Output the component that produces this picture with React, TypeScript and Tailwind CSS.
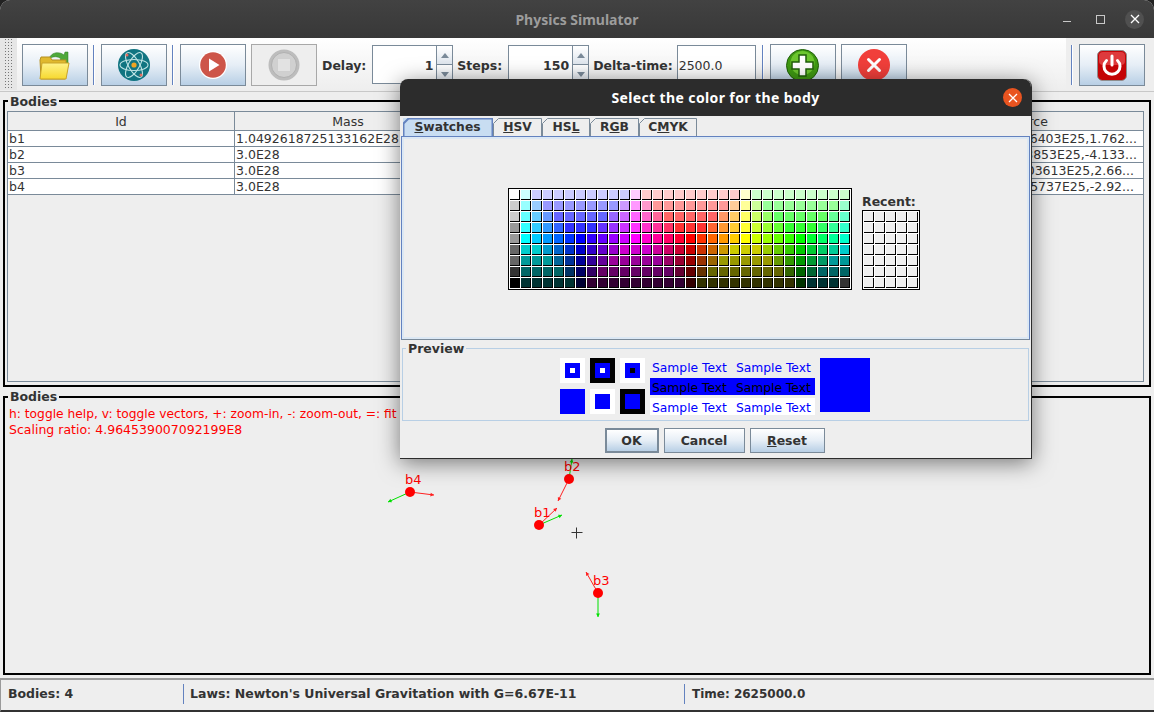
import type { ReactNode } from 'react';

const GRAD = 'bg-gradient-to-b from-white via-[#e6eef6] to-[#b8cfe5]';

// Swatch rows from the Swing colour chooser, [hex, repeat]
const SWATCHES: [string, number][][] = [
  [['#ffffff', 1], ['#ccffff', 1], ['#ccccff', 9], ['#ffccff', 1], ['#ffcccc', 9], ['#ffffcc', 1], ['#ccffcc', 9]],
  [['#cccccc', 1], ['#99ffff', 1], ['#99ccff', 1], ['#9999ff', 7], ['#cc99ff', 1], ['#ff99ff', 1], ['#ff99cc', 1], ['#ff9999', 7], ['#ffcc99', 1], ['#ffff99', 1], ['#ccff99', 1], ['#99ff99', 7], ['#99ffcc', 1]],
  [['#cccccc', 1], ['#66ffff', 1], ['#66ccff', 1], ['#6699ff', 1], ['#6666ff', 5], ['#9966ff', 1], ['#cc66ff', 1], ['#ff66ff', 1], ['#ff66cc', 1], ['#ff6699', 1], ['#ff6666', 5], ['#ff9966', 1], ['#ffcc66', 1], ['#ffff66', 1], ['#ccff66', 1], ['#99ff66', 1], ['#66ff66', 5], ['#66ff99', 1], ['#66ffcc', 1]],
  [['#999999', 1], ['#33ffff', 1], ['#33ccff', 1], ['#3399ff', 1], ['#3366ff', 1], ['#3333ff', 3], ['#6633ff', 1], ['#9933ff', 1], ['#cc33ff', 1], ['#ff33ff', 1], ['#ff33cc', 1], ['#ff3399', 1], ['#ff3366', 1], ['#ff3333', 3], ['#ff6633', 1], ['#ff9933', 1], ['#ffcc33', 1], ['#ffff33', 1], ['#ccff33', 1], ['#99ff33', 1], ['#66ff33', 1], ['#33ff33', 3], ['#33ff66', 1], ['#33ff99', 1], ['#33ffcc', 1]],
  [['#999999', 1], ['#00ffff', 1], ['#00ccff', 1], ['#0099ff', 1], ['#0066ff', 1], ['#0033ff', 1], ['#0000ff', 1], ['#3300ff', 1], ['#6600ff', 1], ['#9900ff', 1], ['#cc00ff', 1], ['#ff00ff', 1], ['#ff00cc', 1], ['#ff0099', 1], ['#ff0066', 1], ['#ff0033', 1], ['#ff0000', 1], ['#ff3300', 1], ['#ff6600', 1], ['#ff9900', 1], ['#ffcc00', 1], ['#ffff00', 1], ['#ccff00', 1], ['#99ff00', 1], ['#66ff00', 1], ['#33ff00', 1], ['#00ff00', 1], ['#00ff33', 1], ['#00ff66', 1], ['#00ff99', 1], ['#00ffcc', 1]],
  [['#666666', 1], ['#00cccc', 2], ['#0099cc', 1], ['#0066cc', 1], ['#0033cc', 1], ['#0000cc', 1], ['#3300cc', 1], ['#6600cc', 1], ['#9900cc', 1], ['#cc00cc', 3], ['#cc0099', 1], ['#cc0066', 1], ['#cc0033', 1], ['#cc0000', 1], ['#cc3300', 1], ['#cc6600', 1], ['#cc9900', 1], ['#cccc00', 3], ['#99cc00', 1], ['#66cc00', 1], ['#33cc00', 1], ['#00cc00', 1], ['#00cc33', 1], ['#00cc66', 1], ['#00cc99', 1], ['#00cccc', 1]],
  [['#666666', 1], ['#009999', 3], ['#006699', 1], ['#003399', 1], ['#000099', 1], ['#330099', 1], ['#660099', 1], ['#990099', 5], ['#990066', 1], ['#990033', 1], ['#990000', 1], ['#993300', 1], ['#996600', 1], ['#999900', 5], ['#669900', 1], ['#339900', 1], ['#009900', 1], ['#009933', 1], ['#009966', 1], ['#009999', 2]],
  [['#333333', 1], ['#006666', 4], ['#003366', 1], ['#000066', 1], ['#330066', 1], ['#660066', 7], ['#660033', 1], ['#660000', 1], ['#663300', 1], ['#666600', 7], ['#336600', 1], ['#006600', 1], ['#006633', 1], ['#006666', 3]],
  [['#000000', 1], ['#003333', 5], ['#000033', 1], ['#330033', 9], ['#330000', 1], ['#333300', 9], ['#003300', 1], ['#003333', 3], ['#333333', 1]],
];

const ROWS = [
  { id: 'b1', mass: '1.0492618725133162E28', force: '1.23456789012346403E25,1.762...', pad: 'pr-[6px]' },
  { id: 'b2', mass: '3.0E28', force: '-1.23456789013853E25,-4.133...', pad: 'pr-[6px]' },
  { id: 'b3', mass: '3.0E28', force: '1.234567890103613E25,2.66...', pad: 'pr-[9px]' },
  { id: 'b4', mass: '3.0E28', force: '-1.23456789015737E25,-2.92...', pad: 'pr-[9px]' },
];

function ToolButton({ children, className = '', disabled = false }: { children: ReactNode; className?: string; disabled?: boolean }) {
  return (
    <div
      className={`flex h-[42px] w-[66px] shrink-0 items-center justify-center border ${
        disabled ? 'border-[#a8a8a8] bg-[#eeeeee]' : `border-[#7a8a99] ${GRAD}`
      } ${className}`}
    >
      {children}
    </div>
  );
}

function Sep({ className = '' }: { className?: string }) {
  return <div className={`h-[40px] w-[2px] shrink-0 border-l border-[#6382bf] bg-white ${className}`} />;
}

function Spinner({ value, className = '' }: { value: string; className?: string }) {
  return (
    <div className={`flex h-[39px] w-[81px] shrink-0 border border-[#7a8a99] bg-white ${className}`}>
      <div className="flex flex-1 items-center justify-end pr-[3px] pt-[3px] font-bold">{value}</div>
      <div className="flex w-[16px] flex-col border-l border-[#7a8a99] bg-[#eeeeee]">
        <div className="flex h-[19px] items-center justify-center border-b border-[#7a8a99] bg-gradient-to-b from-white to-[#dfe6ee]">
          <div className="h-0 w-0 border-x-[4px] border-b-[5px] border-x-transparent border-b-[#7a8a99]" />
        </div>
        <div className="flex flex-1 items-center justify-center bg-gradient-to-b from-white to-[#dfe6ee]">
          <div className="h-0 w-0 border-x-[4px] border-t-[5px] border-x-transparent border-t-[#7a8a99]" />
        </div>
      </div>
    </div>
  );
}

function FolderIcon() {
  return (
    <svg width="34" height="32" viewBox="0 0 34 32">
      <defs>
        <linearGradient id="folderFront" x1="0" y1="0" x2="0" y2="1">
          <stop offset="0" stopColor="#fff38a" />
          <stop offset="1" stopColor="#f6d82e" />
        </linearGradient>
      </defs>
      <path d="M11 10 C13 3 21 2 26 6 L27 3 L30 3 L30 14 L20 13 L23 10 C20 7 15 7 11 10Z" fill="#4ea83a" stroke="#2f7d25" strokeWidth="0.5" />
      <path d="M2 11 L3 8 L12 8 L14 11 L28 11 L28 14 L27 30 L3 30Z" fill="#e0b92e" stroke="#b48f20" strokeWidth="1" />
      <path d="M4 14 L31 14 L28 30 L2 30Z" fill="url(#folderFront)" stroke="#c9a32a" strokeWidth="1" />
    </svg>
  );
}

function AtomIcon() {
  return (
    <svg width="32" height="32" viewBox="0 0 32 32">
      <circle cx="16" cy="16" r="16" fill="#107481" />
      <g fill="none" stroke="#bfe3e4" strokeWidth="1.1">
        <ellipse cx="16" cy="16" rx="14" ry="5.5" />
        <ellipse cx="16" cy="16" rx="14" ry="5.5" transform="rotate(60 16 16)" />
        <ellipse cx="16" cy="16" rx="14" ry="5.5" transform="rotate(120 16 16)" />
      </g>
      <circle cx="16" cy="16" r="2.6" fill="#efa423" />
      <circle cx="9" cy="6" r="1.5" fill="#e36a5d" />
      <circle cx="23" cy="26" r="1.5" fill="#e36a5d" />
    </svg>
  );
}

function PlayIcon() {
  return (
    <svg width="28" height="28" viewBox="0 0 28 28">
      <circle cx="14" cy="14" r="14" fill="#ffffff" />
      <circle cx="14" cy="14" r="12.8" fill="#cd5549" />
      <path d="M10 7.5 L20.5 14 L10 20.5Z" fill="#ffffff" />
    </svg>
  );
}

function StopIcon() {
  return (
    <svg width="32" height="32" viewBox="0 0 32 32">
      <circle cx="16" cy="16" r="15.5" fill="#bdbdbd" />
      <circle cx="16" cy="16" r="12.5" fill="#d0d0d0" stroke="#b0b0b0" />
      <rect x="9.5" y="9.5" width="13" height="13" fill="#e2e2e2" stroke="#cfcfcf" />
    </svg>
  );
}

function AddIcon() {
  return (
    <svg width="33" height="33" viewBox="0 0 33 33">
      <circle cx="16.5" cy="16.5" r="16" fill="#3f9a12" stroke="#1f5f08" />
      <circle cx="16.5" cy="14" r="12" fill="#6cc62e" />
      <path d="M13 6 H20 V13 H27 V20 H20 V27 H13 V20 H6 V13 H13Z" fill="#ffffff" stroke="#1f5f08" strokeWidth="1.5" />
    </svg>
  );
}

function DeleteIcon() {
  return (
    <svg width="32" height="32" viewBox="0 0 32 32">
      <circle cx="16" cy="16" r="16" fill="#f13f3b" />
      <path d="M10.5 10.5 L21.5 21.5 M21.5 10.5 L10.5 21.5" stroke="#ffffff" strokeWidth="3" strokeLinecap="round" />
    </svg>
  );
}

function ExitIcon() {
  return (
    <svg width="30" height="31" viewBox="0 0 30 31">
      <rect x="0.5" y="0.5" width="29" height="30" rx="5" fill="#c40406" stroke="#8d8d8d" />
      <rect x="2" y="2" width="26" height="13" rx="4" fill="#de3a3c" />
      <path d="M9.5 10.5 A8 8 0 1 0 20.5 10.5" fill="none" stroke="#ffffff" strokeWidth="3" strokeLinecap="round" />
      <path d="M15 6 V15" stroke="#ffffff" strokeWidth="3" strokeLinecap="round" />
    </svg>
  );
}

function Toolbar() {
  return (
    <div className="flex h-[54px] shrink-0 border-b border-[#c8c8c8] bg-[#eeeeee]">
      <div className="flex h-[52px] w-[1066px] shrink-0 items-start bg-gradient-to-b from-white via-[#f6f6f6] to-[#eeeeee]">
        <div className="h-[52px] w-[17px] shrink-0 bg-[#e6e6e6] pl-[4px]">
          <div className="h-full w-[9px] bg-[radial-gradient(#777777_0.7px,transparent_0.9px)] bg-[length:3px_3px]" />
        </div>
        <div className="flex items-start pt-[6px]">
          <ToolButton className="ml-[5px]"><FolderIcon /></ToolButton>
          <Sep className="ml-[5px] mt-[1px]" />
          <ToolButton className="ml-[6px]"><AtomIcon /></ToolButton>
          <Sep className="ml-[5px] mt-[1px]" />
          <ToolButton className="ml-[6px]"><PlayIcon /></ToolButton>
          <ToolButton className="ml-[5px]" disabled><StopIcon /></ToolButton>
          <span className="ml-[5px] mt-[13px] font-bold">Delay:</span>
          <Spinner value="1" className="ml-[6px] mt-[1px]" />
          <span className="ml-[4px] mt-[13px] font-bold">Steps:</span>
          <Spinner value="150" className="ml-[6px] mt-[1px]" />
          <span className="ml-[4px] mt-[13px] font-bold">Delta-time:</span>
          <div className="ml-[4px] mt-[1px] flex h-[39px] w-[79px] shrink-0 items-center border border-[#7a8a99] bg-white pl-[1px] pt-[3px]">2500.0</div>
          <Sep className="ml-[6px] mt-[1px]" />
          <ToolButton className="ml-[6px]"><AddIcon /></ToolButton>
          <ToolButton className="ml-[5px]"><DeleteIcon /></ToolButton>
        </div>
      </div>
      <div className="flex items-start pt-[6px]">
        <Sep className="ml-[5px] mt-[1px]" />
        <ToolButton className="ml-[6px]"><ExitIcon /></ToolButton>
      </div>
    </div>
  );
}

function TitledPanel({ children, className = '', titleClass = 'top-[-9px]' }: { children: ReactNode; className?: string; titleClass?: string }) {
  return (
    <div className={`relative mx-[3px] border-2 border-black ${className}`}>
      <span className={`absolute left-[3px] bg-[#eeeeee] px-[2px] text-[12.5px] font-bold leading-[15px] ${titleClass}`}>Bodies</span>
      {children}
    </div>
  );
}

function BodiesTable() {
  return (
    <div className="h-[271px] border border-[#7a8a99]">
      <div className="grid h-[19px] grid-cols-5 border-b border-[#7a8a99]">
        {['Id', 'Mass', 'Position', 'Velocity', 'Force'].map((h) => (
          <div key={h} className="border-r border-[#7a8a99] text-center leading-[19px] last:border-r-0 last:pl-[3px]">{h}</div>
        ))}
      </div>
      {ROWS.map((r) => (
        <div key={r.id} className="grid h-[16px] grid-cols-5 border-b border-[#7a8a99] bg-white">
          <div className="border-r border-[#7a8a99] pl-[1px] leading-[15px]">{r.id}</div>
          <div className="border-r border-[#7a8a99] pl-[1px] leading-[15px]">{r.mass}</div>
          <div className="overflow-hidden whitespace-nowrap border-r border-[#7a8a99] pl-[1px] leading-[15px]">0.0,0.0</div>
          <div className="overflow-hidden whitespace-nowrap border-r border-[#7a8a99] pl-[1px] leading-[15px]">0.0,0.0</div>
          <div className={`flex justify-end overflow-hidden whitespace-nowrap leading-[15px] ${r.pad}`}>{r.force}</div>
        </div>
      ))}
    </div>
  );
}

function Arrow({ x1, y1, x2, y2, color }: { x1: number; y1: number; x2: number; y2: number; color: string }) {
  const a = Math.atan2(y2 - y1, x2 - x1);
  const p = (off: number) => `${x2 - 4 * Math.cos(a + off)},${y2 - 4 * Math.sin(a + off)}`;
  return (
    <g>
      <line x1={x1} y1={y1} x2={x2} y2={y2} stroke={color} strokeWidth="1" />
      <polygon points={`${x2},${y2} ${p(0.5)} ${p(-0.5)}`} fill={color} />
    </g>
  );
}

// Coordinates are page pixels: the svg's viewBox starts where the viewer panel does
function Body({ name, x, y, red, green }: { name: string; x: number; y: number; red: [number, number]; green: [number, number] }) {
  return (
    <g>
      <Arrow x1={x} y1={y} x2={red[0]} y2={red[1]} color="#ff2020" />
      <Arrow x1={x} y1={y} x2={green[0]} y2={green[1]} color="#00e000" />
      <circle cx={x} cy={y} r="5" fill="#ff0000" />
      <text x={x - 5} y={y - 8} fill="#ff0000" fontSize="13" fontFamily="'DejaVu Sans', sans-serif">{name}</text>
    </g>
  );
}

function Viewer() {
  return (
    <TitledPanel className="mt-[9px] h-[279px]">
      <div className="relative h-full text-[#ff0000]">
        <div className="pl-[4px] pt-[9px] text-[12.5px] leading-[15px]">
          <div className="text-[12.28px]">h: toggle help, v: toggle vectors, +: zoom-in, -: zoom-out, =: fit</div>
          <div>Scaling ratio: 4.964539007092199E8</div>
        </div>
        <svg className="absolute left-0 top-0" width="1144" height="275" viewBox="5 398 1144 275">
          <Body name="b4" x={410} y={492} red={[434, 495]} green={[388, 502]} />
          <Body name="b2" x={569} y={479} red={[558, 501]} green={[572, 459]} />
          <Body name="b1" x={539} y={525} red={[557, 508]} green={[562, 515]} />
          <Body name="b3" x={598} y={593} red={[586, 572]} green={[598, 617]} />
          <path d="M571.5 532.5 H582.5 M576.5 527.5 V538.5" stroke="#333333" strokeWidth="1" />
        </svg>
      </div>
    </TitledPanel>
  );
}

function StatusBar() {
  return (
    <div className="mt-[3px] flex h-[34px] items-center border-b-2 border-l border-t-2 border-[#9a9a9a] border-b-[#333333] bg-[#eeeeee] pb-[2px] font-bold">
      <div className="flex w-[182px] items-center pl-[7px]">Bodies: 4</div>
      <div className="h-[20px] w-px bg-[#6382bf]" />
      <div className="w-[500px] pl-[6px]">Laws: Newton's Universal Gravitation with G=6.67E-11</div>
      <div className="h-[20px] w-px bg-[#6382bf]" />
      <div className="pl-[7px] text-[12px]">Time: 2625000.0</div>
    </div>
  );
}

function Tab({ width, selected = false, children }: { width: number; selected?: boolean; children: ReactNode }) {
  const line = selected ? '#6382bf' : '#7a8a99';
  return (
    <div
      className={`relative flex h-[18px] shrink-0 items-center justify-center pt-[1px] text-[12.3px] font-bold ${selected ? 'bg-[#c8ddf2] pr-[1px]' : ''}`}
      style={{ width }}
    >
      <svg className="absolute left-0 top-0" width={width} height="18">
        <path d={`M0.5 18 V5.5 L5.5 0.5 H${width - 0.5} V18`} fill="none" stroke={line} strokeWidth={selected ? 2 : 1} />
      </svg>
      <span className="relative">{children}</span>
    </div>
  );
}

function SwatchGrid() {
  return (
    <div className="flex flex-col gap-px border border-black bg-white p-px">
      {SWATCHES.map((row, i) => (
        <div key={i} className="flex gap-px">
          {row.flatMap(([c, n], j) =>
            Array.from({ length: n }, (_, k) => (
              <div key={`${j}-${k}`} className="h-[10px] w-[10px] border-b border-r border-black" style={{ background: c }} />
            ))
          )}
        </div>
      ))}
    </div>
  );
}

function RecentGrid() {
  return (
    <div className="flex flex-col gap-px border border-black bg-white p-px">
      {Array.from({ length: 7 }, (_, i) => (
        <div key={i} className="flex gap-px">
          {Array.from({ length: 5 }, (_, j) => (
            <div key={j} className="h-[10px] w-[10px] border-b border-r border-black bg-[#eeeeee]" />
          ))}
        </div>
      ))}
    </div>
  );
}

function Square({ outer, mid, inner }: { outer: string; mid: string; inner?: string }) {
  return (
    <div className={`flex h-[25px] w-[25px] items-center justify-center ${outer}`}>
      {mid && (
        <div className={`flex h-[15px] w-[15px] items-center justify-center ${mid}`}>
          {inner && <div className={`h-[5px] w-[5px] ${inner}`} />}
        </div>
      )}
    </div>
  );
}

function SampleLine({ className = '' }: { className?: string }) {
  return (
    <div className={`flex h-[17px] w-[165px] items-center gap-[9px] pl-[2px] text-[12.3px] ${className}`}>
      <span>Sample Text</span>
      <span>Sample Text</span>
    </div>
  );
}

function Preview() {
  return (
    <div className="relative mx-[2px] mt-[8px] h-[73px] border border-[#b8cfe5]">
      <span className="absolute left-[3px] top-[-8px] bg-[#eeeeee] px-[2px] text-[12.5px] font-bold leading-[15px]">Preview</span>
      <div className="flex pl-[157px] pt-[9px]">
        <div className="grid grid-cols-3 gap-x-[5px] gap-y-[5px]">
          <Square outer="bg-white" mid="bg-[#0000ff]" inner="bg-white" />
          <Square outer="bg-black" mid="bg-[#0000ff]" inner="bg-white" />
          <Square outer="bg-white" mid="bg-[#0000ff]" inner="bg-black" />
          <Square outer="bg-[#0000ff]" mid="" />
          <Square outer="bg-white" mid="bg-[#0000ff]" />
          <Square outer="bg-black" mid="bg-[#0000ff]" />
        </div>
        <div className="ml-[5px] flex flex-col text-[#0000ff]">
          <SampleLine className="mt-[1px] h-[19px]" />
          <SampleLine className="bg-[#0000ff] pt-[3px] text-black" />
          <SampleLine className="mt-[3px] bg-white pt-[3px]" />
        </div>
        <div className="ml-[5px] h-[54px] w-[50px] bg-[#0000ff]" />
      </div>
    </div>
  );
}

function DialogButton({ children, width, main = false }: { children: ReactNode; width: number; main?: boolean }) {
  return (
    <div
      className={`flex h-[25px] items-center justify-center border-[#7a8a99] pt-[1px] text-[12.5px] font-bold ${GRAD} ${main ? 'border-2' : 'border'}`}
      style={{ width }}
    >
      {children}
    </div>
  );
}

function ColorDialog() {
  return (
    <div className="absolute left-[400px] top-[79px] flex h-[380px] w-[632px] flex-col rounded-t-[8px] border-b border-r border-[#2c2c2c] bg-[#eeeeee] shadow-[0_4px_22px_rgba(0,0,0,0.5)]">
      <div className="relative flex h-[37px] shrink-0 items-center justify-center rounded-t-[8px] bg-[#2c2c2c] text-[14px] font-bold tracking-[0.38px] text-white [font-family:'Noto_Sans',sans-serif]">
        Select the color for the body
        <div className="absolute right-[9px] top-[9px] flex h-[19px] w-[19px] items-center justify-center rounded-full bg-[#e95420]">
          <svg width="10" height="10" viewBox="0 0 10 10">
            <path d="M1 1 L9 9 M9 1 L1 9" stroke="#ffffff" strokeWidth="1.3" />
          </svg>
        </div>
      </div>
      <div className="flex pl-[3px] pt-[2px]">
        <Tab width={90} selected><span className="underline">S</span>watches</Tab>
        <Tab width={49}><span className="underline">H</span>SV</Tab>
        <Tab width={48}>HS<span className="underline">L</span></Tab>
        <Tab width={49}>R<span className="underline">G</span>B</Tab>
        <Tab width={58}>C<span className="underline">M</span>YK</Tab>
      </div>
      <div className="mx-[1px] h-[204px] border border-[#6382bf] border-b-[#7a8a99]">
        <div className="h-full border-2 border-[#dce8f4] pl-[104px] pt-[49px]">
          <div className="flex items-end">
            <SwatchGrid />
            <div className="ml-[10px]">
              <div className="text-[12.5px] font-bold leading-[16px]">Recent:</div>
              <RecentGrid />
            </div>
          </div>
        </div>
      </div>
      <Preview />
      <div className="mt-[7px] flex justify-center gap-[5px] pr-[2px]">
        <DialogButton width={54} main>OK</DialogButton>
        <DialogButton width={81}>Cancel</DialogButton>
        <DialogButton width={75}><span><span className="underline">R</span>eset</span></DialogButton>
      </div>
    </div>
  );
}

export default function App() {
  return (
    <div className="relative h-[712px] w-[1154px] overflow-hidden bg-[#222222] text-[12.5px] text-[#333333] [font-family:'DejaVu_Sans',sans-serif]">
      <div className="flex h-full flex-col rounded-t-[10px] bg-[#eeeeee]">
        <div className="relative flex h-[38px] shrink-0 items-center justify-center rounded-t-[10px] bg-gradient-to-b from-[#424242] to-[#383838] text-[14px] font-bold text-[#9c9c9c] [font-family:'Noto_Sans',sans-serif]">
          Physics Simulator
          <div className="absolute right-[10px] top-[0px] flex h-full items-center">
            <div className="mt-[5px] h-px w-[8px] bg-[#c8c8c8]" />
            <div className="ml-[25px] h-[9px] w-[9px] border border-[#c8c8c8]" />
            <div className="ml-[20px] flex h-[19px] w-[19px] items-center justify-center rounded-full bg-[#505050]">
              <svg width="10" height="10" viewBox="0 0 10 10">
                <path d="M1 1 L9 9 M9 1 L1 9" stroke="#ffffff" strokeWidth="1.3" />
              </svg>
            </div>
          </div>
        </div>
        <Toolbar />
        <TitledPanel className="mt-[8px] h-[287px] pb-0 pl-[2px] pr-[5px] pt-[9px]" titleClass="top-[-8px]">
          <BodiesTable />
        </TitledPanel>
        <Viewer />
        <StatusBar />
      </div>
      <ColorDialog />
    </div>
  );
}
